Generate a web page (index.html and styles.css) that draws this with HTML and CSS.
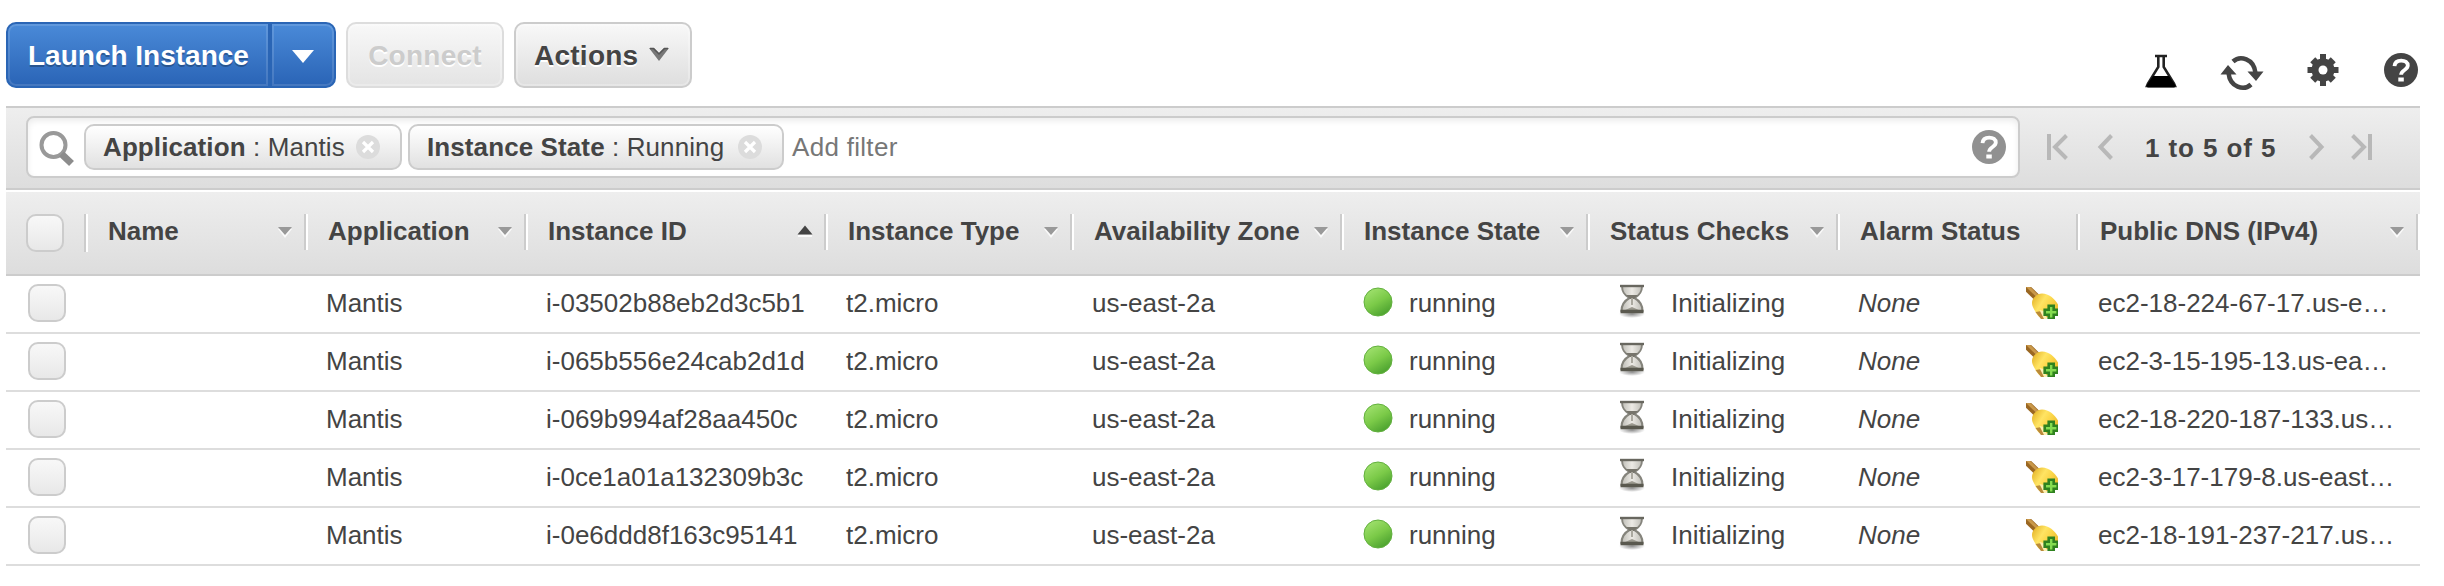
FILE: index.html
```html
<!DOCTYPE html>
<html lang="en">
<head>
<meta charset="utf-8">
<title>Instances</title>
<link rel="stylesheet" href="styles.css">
</head>
<body>
<svg class="defs" width="0" height="0" aria-hidden="true">
  <defs>
    <linearGradient id="glass" x1="0" x2="1" y1="0" y2="0"><stop offset="0" stop-color="#bdbcb5"/><stop offset=".5" stop-color="#eceae5"/><stop offset="1" stop-color="#bdbcb5"/></linearGradient>
    <linearGradient id="gold" x1="0" x2="1" y1=".2" y2=".8"><stop offset="0" stop-color="#e6b62c"/><stop offset=".35" stop-color="#ffe463"/><stop offset=".6" stop-color="#fbd548"/><stop offset="1" stop-color="#e9b52a"/></linearGradient>
    <linearGradient id="ball" x1=".2" x2=".8" y1="0" y2="1"><stop offset="0" stop-color="#a2e270"/><stop offset=".5" stop-color="#7bca48"/><stop offset="1" stop-color="#459c2c"/></linearGradient>
    <radialGradient id="shade"><stop offset="0" stop-color="#000" stop-opacity=".45"/><stop offset="1" stop-color="#000" stop-opacity="0"/></radialGradient>
    <symbol id="i-help" viewBox="0 0 34 34"><circle cx="17" cy="17" r="17" fill="currentColor"/><path d="M10.500 13.200C10.800 9.200 13.400 7.600 17.200 7.600c3.900 0 6.600 1.800 6.600 5 0 4.600-6.700 4.200-6.700 9.200" fill="none" stroke="#fff" stroke-width="3.800"/><rect x="14.300" y="24.500" width="5.500" height="4" fill="#fff"/></symbol>
    <symbol id="i-clear" viewBox="0 0 26 26"><circle cx="13" cy="13" r="12" fill="#dcdcdc"/><path d="M8 8l10 10M18 8L8 18" stroke="#fff" stroke-width="3.200"/></symbol>
    <symbol id="i-down" viewBox="0 0 18 14"><path d="M2 4h14l-7 9z" fill="#fff" opacity=".8"/><path d="M2 2h14l-7 8z" fill="#999"/></symbol>
    <symbol id="i-up" viewBox="0 0 18 14"><path d="M2 11h14v2H2z" fill="#fff" opacity=".8"/><path d="M1.500 10.500h15L9 1.500z" fill="#444"/></symbol>
    <symbol id="i-ball" viewBox="0 0 30 30"><circle cx="15" cy="15" r="14" fill="url(#ball)" stroke="#62b03e" stroke-width="1"/></symbol>
    <symbol id="i-glass" viewBox="0 0 28 36"><ellipse cx="14" cy="31" rx="13" ry="4" fill="url(#shade)"/><path d="M4 3h20c0 6-2 9-7.500 12C22 18 24.500 22 24.500 28h-21C3.500 22 6 18 11.500 15 6 12 4 9 4 3z" fill="url(#glass)" stroke="#85847c" stroke-width="2"/><path d="M8 12h12l-4 4h-4z" fill="#77756c"/><path d="M14 15v7" stroke="#aaa89f" stroke-width="2"/><path d="M6 27.500l8-3.500 8 3.500z" fill="#9b998f"/><path d="M2 3h24" stroke="#68675f" stroke-width="2.400"/><path d="M2.500 28.500h23" stroke="#5a594f" stroke-width="3.500"/></symbol>
    <symbol id="i-bell" viewBox="0 0 32 32"><path d="M-2-2l14 13.500" stroke="#9a6722" stroke-width="7"/><path d="M0-2l13 12.500" stroke="#c9984a" stroke-width="3"/><path d="M6 16c0-5 5-9.500 10-9.500 7 0 12.500 5 16 11V27L17 31.500c-4-1-6-3.500-8-7.500-1.500-3-3-5-3-8z" fill="url(#gold)"/><path d="M9.500 25l5.500 7h4l-3-8z" fill="#b98a3a"/><path d="M13.500 23l4.500 9h3l-3-8z" fill="#fdf0b0"/><path d="M22.700 18.700h5v4h4v5h-4v4h-5v-4h-4v-5h4z" fill="#84dc50" stroke="#2f821f" stroke-width="2.600"/></symbol>
  </defs>
</svg>
<main class="console">
  <header class="actions">
    <div class="split">
      <button class="btn primary main">Launch Instance</button>
      <button class="btn primary more"><svg width="22" height="13" viewBox="0 0 22 13"><path d="M0 0h22L11 13z" fill="#fff"/></svg></button>
    </div>
    <button class="btn plain off">Connect</button>
    <button class="btn plain menu">Actions <svg width="22" height="16" viewBox="0 0 22 16"><path d="M1 2h5l5 5 5-5h5L11 15z" fill="#777"/><path d="M2 2.500h3.500L11 8l5.500-5.500H20" fill="none" stroke="#555" stroke-width="1.500"/></svg></button>
    <nav class="tools">
      <svg class="flask" width="32" height="34" viewBox="0 0 32 34"><path d="M10 2h12M13.300 2v11L3 29.500 2 32h28l-1-2.500L18.700 13V2" fill="none" stroke="#222" stroke-width="2.600"/><path d="M8 22h16l6.500 9.500-1 2h-27l-1-2z" fill="#000"/></svg>
      <svg class="refresh" width="44" height="36" viewBox="0 0 44 36"><g fill="none" stroke="#444" stroke-width="4.500"><path d="M13 6.500C20 0 34 3.500 35.500 18"/><path d="M31 29.500C24 36 10 32.500 8.500 18"/></g><path d="M27.500 16.500h16L36 26zM.5 19.500h16L8 10z" fill="#444"/></svg>
      <svg class="gear" width="32" height="34" viewBox="-16 -17 32 34"><g fill="#444"><circle r="11.500"/><rect x="-3" y="-16" width="6" height="32"/><rect x="-15.500" y="-3" width="31" height="6"/><g transform="rotate(45)"><rect x="-3.500" y="-14.500" width="7" height="29"/><rect x="-14.500" y="-3.500" width="29" height="7"/></g></g><circle r="4.500" fill="#fff"/></svg>
      <svg class="help" width="34" height="34"><use href="#i-help"/></svg>
    </nav>
  </header>

  <section class="filterbar">
    <div class="search">
      <svg class="lens" width="36" height="38" viewBox="0 0 36 38"><circle cx="14.500" cy="15" r="12" fill="none" stroke="#999" stroke-width="4"/><path d="M22.500 24l10 9.500" stroke="#8c8c8c" stroke-width="7"/></svg>
      <span class="tag first"><span class="label"><b>Application</b> : Mantis</span><svg width="26" height="26"><use href="#i-clear"/></svg></span>
      <span class="tag second"><span class="label"><b>Instance State</b> : Running</span><svg width="26" height="26"><use href="#i-clear"/></svg></span>
      <span class="add">Add filter</span>
      <svg class="hint" width="34" height="34"><use href="#i-help"/></svg>
    </div>
    <div class="pager">
      <svg width="22" height="28" viewBox="0 0 22 28"><path d="M3 1v26M20.500 2.500L9 14l11.500 11.500" fill="none" stroke="#b8b8b8" stroke-width="4"/></svg>
      <svg class="prev" width="16" height="28" viewBox="0 0 16 28"><path d="M14.500 2.500L3.500 14l11 11.500" fill="none" stroke="#b8b8b8" stroke-width="4"/></svg>
      <b class="range">1 to 5 of 5</b>
      <svg class="next" width="16" height="28" viewBox="0 0 16 28"><path d="M1.500 2.500L12.500 14l-11 11.500" fill="none" stroke="#b8b8b8" stroke-width="4"/></svg>
      <svg width="22" height="28" viewBox="0 0 22 28"><path d="M19 1v26M1.500 2.500L13 14 1.500 25.500" fill="none" stroke="#b8b8b8" stroke-width="4"/></svg>
    </div>
  </section>

  <section class="grid">
    <div class="row head">
      <div class="cell pick"><span class="box"></span></div>
      <div class="cell"><span>Name</span><svg width="18" height="14"><use href="#i-down"/></svg></div>
      <div class="cell"><span>Application</span><svg width="18" height="14"><use href="#i-down"/></svg></div>
      <div class="cell"><span>Instance ID</span><svg class="up" width="18" height="14"><use href="#i-up"/></svg></div>
      <div class="cell"><span>Instance Type</span><svg width="18" height="14"><use href="#i-down"/></svg></div>
      <div class="cell"><span>Availability Zone</span><svg width="18" height="14"><use href="#i-down"/></svg></div>
      <div class="cell"><span>Instance State</span><svg width="18" height="14"><use href="#i-down"/></svg></div>
      <div class="cell"><span>Status Checks</span><svg width="18" height="14"><use href="#i-down"/></svg></div>
      <div class="cell"><span>Alarm Status</span></div>
      <div class="cell"><span>Public DNS (IPv4)</span><svg width="18" height="14"><use href="#i-down"/></svg></div>
    </div>
    <div class="row">
      <div class="cell pick"><span class="box"></span></div><div class="cell"></div><div class="cell">Mantis</div><div class="cell">i-03502b88eb2d3c5b1</div><div class="cell">t2.micro</div><div class="cell">us-east-2a</div>
      <div class="cell state"><svg width="30" height="30"><use href="#i-ball"/></svg>running</div>
      <div class="cell check"><svg width="28" height="36"><use href="#i-glass"/></svg>Initializing</div>
      <div class="cell alarm"><i>None</i><svg width="32" height="32"><use href="#i-bell"/></svg></div>
      <div class="cell">ec2-18-224-67-17.us-e…</div>
    </div>
    <div class="row">
      <div class="cell pick"><span class="box"></span></div><div class="cell"></div><div class="cell">Mantis</div><div class="cell">i-065b556e24cab2d1d</div><div class="cell">t2.micro</div><div class="cell">us-east-2a</div>
      <div class="cell state"><svg width="30" height="30"><use href="#i-ball"/></svg>running</div>
      <div class="cell check"><svg width="28" height="36"><use href="#i-glass"/></svg>Initializing</div>
      <div class="cell alarm"><i>None</i><svg width="32" height="32"><use href="#i-bell"/></svg></div>
      <div class="cell">ec2-3-15-195-13.us-ea…</div>
    </div>
    <div class="row">
      <div class="cell pick"><span class="box"></span></div><div class="cell"></div><div class="cell">Mantis</div><div class="cell">i-069b994af28aa450c</div><div class="cell">t2.micro</div><div class="cell">us-east-2a</div>
      <div class="cell state"><svg width="30" height="30"><use href="#i-ball"/></svg>running</div>
      <div class="cell check"><svg width="28" height="36"><use href="#i-glass"/></svg>Initializing</div>
      <div class="cell alarm"><i>None</i><svg width="32" height="32"><use href="#i-bell"/></svg></div>
      <div class="cell">ec2-18-220-187-133.us…</div>
    </div>
    <div class="row">
      <div class="cell pick"><span class="box"></span></div><div class="cell"></div><div class="cell">Mantis</div><div class="cell">i-0ce1a01a132309b3c</div><div class="cell">t2.micro</div><div class="cell">us-east-2a</div>
      <div class="cell state"><svg width="30" height="30"><use href="#i-ball"/></svg>running</div>
      <div class="cell check"><svg width="28" height="36"><use href="#i-glass"/></svg>Initializing</div>
      <div class="cell alarm"><i>None</i><svg width="32" height="32"><use href="#i-bell"/></svg></div>
      <div class="cell">ec2-3-17-179-8.us-east…</div>
    </div>
    <div class="row">
      <div class="cell pick"><span class="box"></span></div><div class="cell"></div><div class="cell">Mantis</div><div class="cell">i-0e6ddd8f163c95141</div><div class="cell">t2.micro</div><div class="cell">us-east-2a</div>
      <div class="cell state"><svg width="30" height="30"><use href="#i-ball"/></svg>running</div>
      <div class="cell check"><svg width="28" height="36"><use href="#i-glass"/></svg>Initializing</div>
      <div class="cell alarm"><i>None</i><svg width="32" height="32"><use href="#i-bell"/></svg></div>
      <div class="cell">ec2-18-191-237-217.us…</div>
    </div>
  </section>
</main>
</body>
</html>
```
FILE: styles.css
```css
* { box-sizing: border-box; }
body { margin: 0; background: #fff; color: #444; font: 26px/30px "Liberation Sans", Arial, sans-serif; overflow: hidden; }
svg { display: block; flex: none; }
.defs { position: absolute; }
.console { width: 2414px; margin-left: 6px; }

.actions { display: flex; height: 106px; padding-top: 22px; align-items: flex-start; }
.btn { height: 66px; margin: 0; border: 2px solid #ccc; border-radius: 10px; font: bold 28px/32px "Liberation Sans", Arial, sans-serif; color: #444; display: flex; align-items: center; padding: 2px 0 0; white-space: nowrap; }
.split { display: flex; width: 330px; margin-right: 10px; }
.primary { border-color: #2a65b5; color: #fff; background: linear-gradient(#4a8ad8, #2a64b6); box-shadow: inset 0 0 0 2px rgba(255, 255, 255, .13); text-shadow: 0 2px 0 rgba(0, 0, 0, .25); }
.main { width: 264px; padding-left: 20px; border-radius: 10px 0 0 10px; }
.more { width: 66px; border-left-width: 2px; border-radius: 0 10px 10px 0; justify-content: center; }
.plain { background: linear-gradient(#f8f8f8, #dedede); text-shadow: 0 2px 0 #fff; box-shadow: inset 0 0 0 2px rgba(255, 255, 255, .25); }
.off { width: 158px; justify-content: center; border-color: #ddd; color: #ccc; background: linear-gradient(#f8f8f8, #e4e4e4); margin-right: 10px; letter-spacing: .25px; }
.menu { width: 178px; padding-left: 18px; gap: 10px; letter-spacing: .25px; }
.menu svg { margin-top: -5px; }
.tools { display: flex; margin-left: auto; padding: 31px 2px 0 0; }
.flask { margin: 1px 43px 0 0; }
.refresh { margin: 2px 43px 0 0; }
.gear { margin: 0 45px 0 0; }
.help { color: #444; }

.filterbar { display: flex; height: 84px; padding: 8px 20px 0; border-top: 2px solid #ccc; border-bottom: 2px solid #ccc; background: linear-gradient(#eee, #ddd); }
.search { display: flex; align-items: center; width: 1994px; height: 62px; padding: 0 12px; border: 2px solid #ccc; border-radius: 8px; background: #fff; box-shadow: inset 0 3px 6px rgba(0, 0, 0, .08); }
.lens { margin: 4px 8px 0 -1px; }
.tag { display: flex; align-items: center; justify-content: space-between; height: 46px; border: 2px solid #ccc; border-radius: 10px; background: linear-gradient(#fff, #e1e1e1); padding: 0 19px 0 17px; margin-right: 6px; white-space: nowrap; letter-spacing: .1px; }
.first { width: 318px; margin-left: 1px; }
.second { width: 376px; }
.add { margin-left: 2px; color: #777; letter-spacing: .3px; }
.hint { margin-left: auto; color: #919191; }
.pager { display: flex; align-items: center; height: 62px; padding: 0 0 0 26px; }
.prev { margin-left: 29px; }
.range { width: 132px; margin: 2px 0 0 32px; white-space: nowrap; letter-spacing: .9px; }
.next { margin: 0 26px 0 32px; }

.row { display: grid; grid-template-columns: 82px 220px 220px 300px 246px 270px 246px 250px 240px 340px; height: 58px; border-bottom: 2px solid #ddd; }
.cell { display: flex; align-items: center; padding: 0 0 2px 18px; white-space: nowrap; min-width: 0; }
.box { width: 38px; height: 38px; border: 2px solid #ccc; border-radius: 10px; background: linear-gradient(#f8f8f8, #e8e8e8); }
.pick { padding: 0 0 0 22px; align-items: flex-start; }
.row .pick { padding-top: 8px; }
.head { height: 86px; border-top: 2px solid #fff; border-bottom-color: #ccc; background: linear-gradient(#eee, #ddd); font-weight: bold; }
.head .cell { height: 36px; margin-top: 22px; padding: 0 12px 2px 20px; border-right: 2px solid #fff; box-shadow: inset -2px 0 0 #ccc; justify-content: space-between; }
.head .pick { height: 38px; padding: 0 0 0 20px; justify-content: flex-start; }
.head svg { margin-top: 1px; }
.head .up { margin-top: -1px; }
.state svg { margin: -2px 16px 0 1px; }
.check svg { margin: -4px 25px 0 10px; }
.alarm { justify-content: space-between; padding-right: 22px; }
.alarm svg { margin-top: -1px; }
```
